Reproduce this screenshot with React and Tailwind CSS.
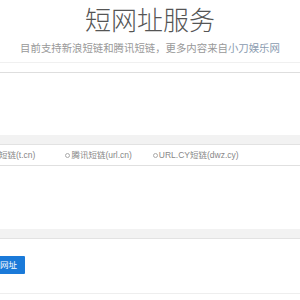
const options = [
  { label: '新浪短链(t.cn)', cls: 'ml-[26px]' },
  { label: '腾讯短链(url.cn)', cls: 'ml-[30px]' },
  { label: 'URL.CY短链(dwz.cy)', cls: 'ml-[21px]' },
]

function Option({ label, cls }) {
  return (
    <label className={`flex items-center ${cls}`}>
      <span className="w-[5px] h-[5px] rounded-full border border-[#aaa] mr-[1px]" />
      <span>{label}</span>
    </label>
  )
}

export default function App() {
  return (
    <div
      className="w-[300px] h-[300px] overflow-hidden bg-white"
      style={{ fontFamily: '"Liberation Sans", "Noto Sans CJK SC", sans-serif' }}
    >
      <div className="w-[400px] -ml-[50px]">
        {/* Header */}
        <div className="pt-[3px] text-center">
          <h1 className="text-[26px] leading-[36px] font-light text-[#555]">短网址服务</h1>
          <p className="text-[10.4px] leading-[14px] mt-[3px] text-[#999]">
            目前支持新浪短链和腾讯短链，更多内容来自<span className="text-[#8a9bb0]">小刀娱乐网</span>
          </p>
        </div>

        <div className="h-[6px]" />
        <div className="border-t border-[#f0f0f0]" />
        <div className="h-[9px]" />

        {/* Long url input */}
        <div className="border-t border-[#dedede]">
          <div className="h-[62px]" />
          <div className="h-[10px] bg-[#f2f2f2] border-b border-[#e2e2e2]" />
          <div className="h-[21px] flex items-center text-[8.5px] text-[#888] border-b border-[#e0e0e0]">
            {options.map((o) => (
              <Option key={o.label} {...o} />
            ))}
          </div>
        </div>

        {/* Result */}
        <div className="h-[63px]" />
        <div className="h-[10px] bg-[#f2f2f2] border-b border-[#e2e2e2]" />
        <div className="h-[54px] pt-[12px]">
          <button className="ml-[25px] h-[18px] px-[8px] bg-[#1a7ad9] text-white text-[8.5px] rounded-[1px]">
            缩短网址
          </button>
        </div>
        <div className="border-t border-[#eeeeee]" />
      </div>
    </div>
  )
}
